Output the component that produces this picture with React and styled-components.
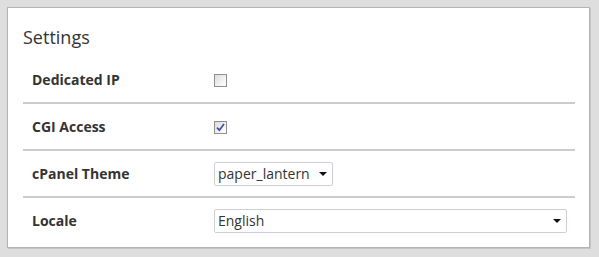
import React from "react";
import styled, { createGlobalStyle } from "styled-components";

const GlobalStyle = createGlobalStyle`
  html, body {
    margin: 0;
    padding: 0;
    background: #dedede;
    font-family: "Open Sans", "Liberation Sans", sans-serif;
    color: #333;
  }
`;

const Page = styled.div`
  padding: 7px 8px 8px 7px;
  box-sizing: border-box;
  width: 599px;
  height: 257px;
`;

const Panel = styled.div`
  background: #fff;
  border: 1px solid #b4b4b4;
  box-shadow: 1px 1px 0 #c4c4c4;
  box-sizing: border-box;
  width: 583px;
  height: 241px;
  padding: 17px 14px 0 15px;
`;

const Title = styled.h2`
  margin: 0 0 8px;
  font-size: 18px;
  line-height: 24px;
  font-weight: 400;
  color: #333;
`;

const Table = styled.div`
  display: flex;
  flex-direction: column;
`;

const Row = styled.div`
  display: grid;
  grid-template-columns: 191px 1fr;
  align-items: center;
  height: 45px;
  border-bottom: 2px solid ${(p) => (p.last ? "transparent" : "#cccccc")};
`;

const Label = styled.div`
  padding-left: 9px;
  font-size: 14px;
  font-weight: 700;
  color: #333;
`;

const Cell = styled.div`
  display: flex;
  align-items: center;
  padding-right: 8px;
`;

const Box = styled.span`
  display: inline-flex;
  align-items: center;
  justify-content: center;
  width: 13px;
  height: 13px;
  box-sizing: border-box;
  border: 1px solid #8e8e8e;
  background: linear-gradient(135deg, #dcdcdc 0%, #f6f6f6 70%, #ffffff 100%);
  margin-top: ${(p) => p.offset || 0}px;
`;

const Checkbox = ({ checked, offset }) => (
  <Box offset={offset}>
    {checked && (
      <svg width="9" height="9" viewBox="0 0 9 9">
        <path
          d="M1 4.6 L3.4 7.2 L8 1"
          fill="none"
          stroke="#3b4fa8"
          strokeWidth="1.7"
        />
      </svg>
    )}
  </Box>
);

const SelectWrap = styled.div`
  position: relative;
  width: ${(p) => (p.full ? "100%" : "119px")};
`;

const Select = styled.select`
  appearance: none;
  -webkit-appearance: none;
  width: 100%;
  height: 24px;
  box-sizing: border-box;
  border: 1px solid #ccd0d6;
  border-radius: 2px;
  background: #fff;
  padding: 0 20px 0 3px;
  font-family: "Open Sans", "Liberation Sans", sans-serif;
  font-size: 14px;
  color: #333;
  outline: none;
`;

const Arrow = styled.span`
  position: absolute;
  right: 6px;
  top: 10px;
  width: 0;
  height: 0;
  border-left: 4px solid transparent;
  border-right: 4px solid transparent;
  border-top: 4px solid #111;
  pointer-events: none;
`;

const Dropdown = ({ value, full }) => (
  <SelectWrap full={full}>
    <Select defaultValue={value}>
      <option value={value}>{value}</option>
    </Select>
    <Arrow />
  </SelectWrap>
);

export default function App() {
  return (
    <Page>
      <GlobalStyle />
      <Panel>
        <Title>Settings</Title>
        <Table>
          <Row>
            <Label>Dedicated IP</Label>
            <Cell>
              <Checkbox offset={2} />
            </Cell>
          </Row>
          <Row>
            <Label>CGI Access</Label>
            <Cell>
              <Checkbox checked offset={2} />
            </Cell>
          </Row>
          <Row>
            <Label>cPanel Theme</Label>
            <Cell>
              <Dropdown value="paper_lantern" />
            </Cell>
          </Row>
          <Row last>
            <Label>Locale</Label>
            <Cell>
              <Dropdown value="English" full />
            </Cell>
          </Row>
        </Table>
      </Panel>
    </Page>
  );
}
